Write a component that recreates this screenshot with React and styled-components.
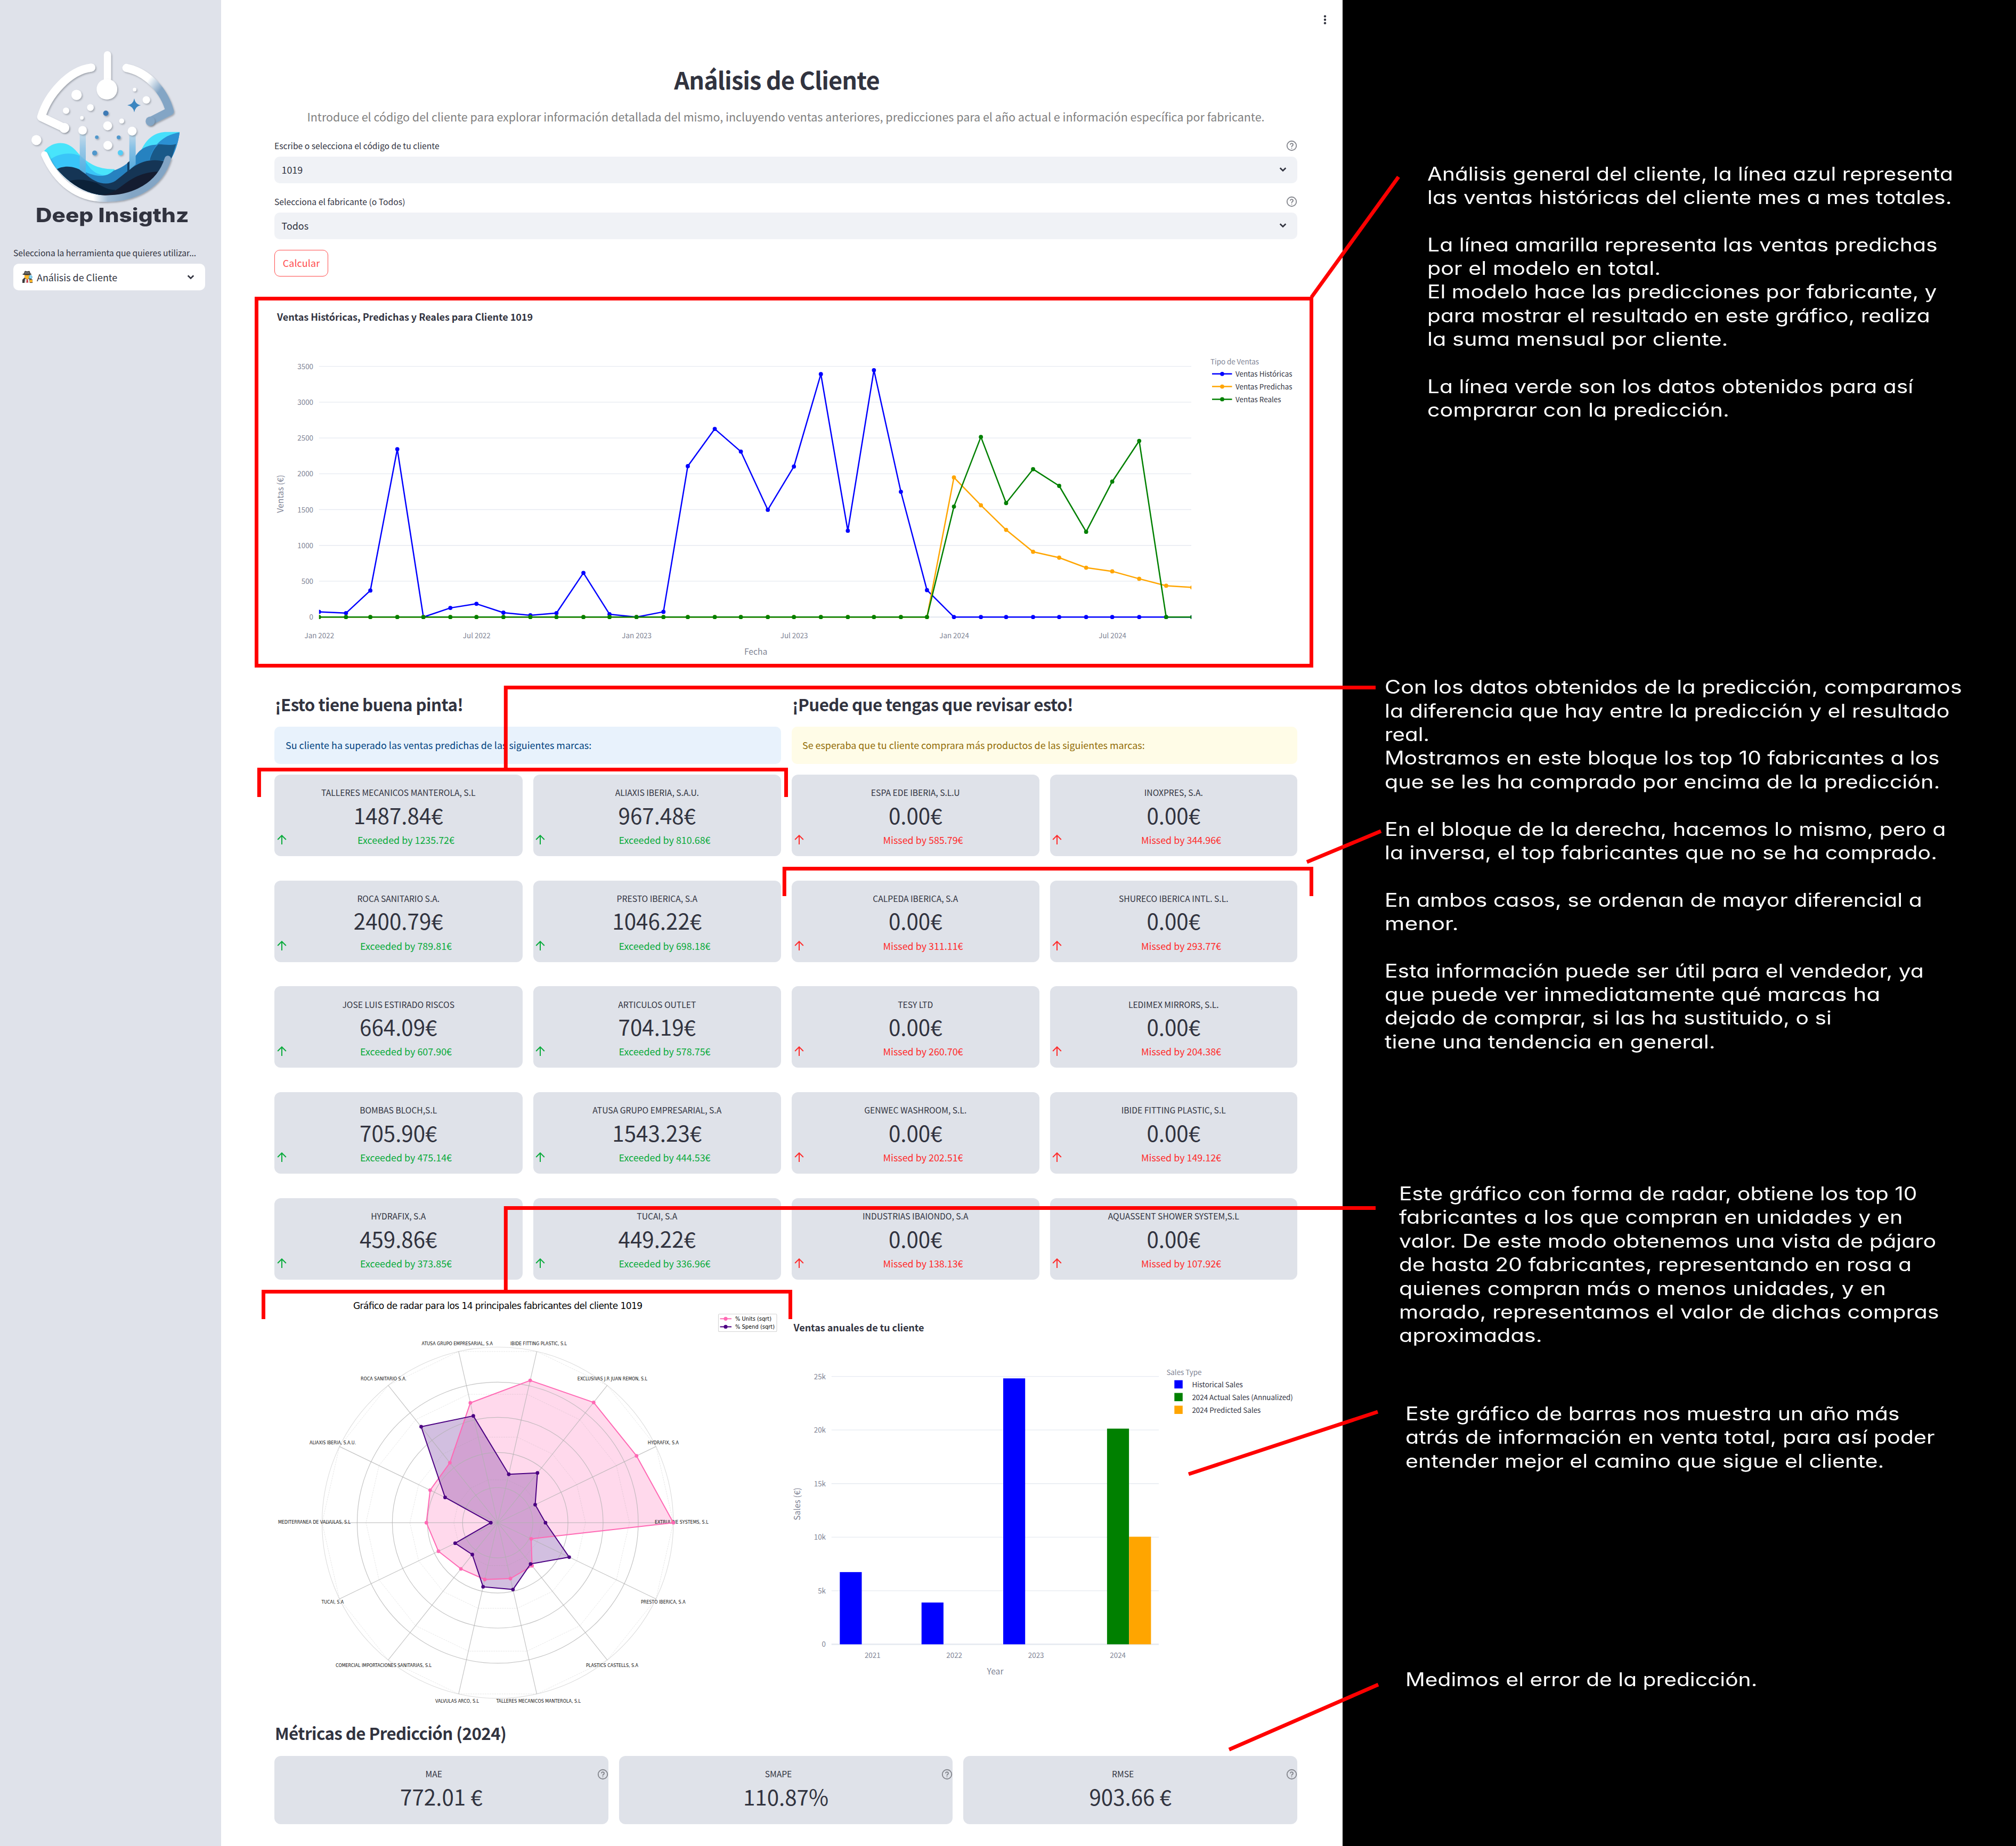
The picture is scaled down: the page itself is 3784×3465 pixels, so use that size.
import React, { useLayoutEffect, useRef, useState } from "react";
import styled, { createGlobalStyle } from "styled-components";

const SANS = `"Noto Sans CJK SC", "Noto Sans", sans-serif`;
const INK = "#31333f";

const GlobalStyle = createGlobalStyle`
  * { box-sizing: border-box; }
  html, body { margin: 0; padding: 0; background: #000; }
  body { font-family: ${SANS}; color: ${INK}; }
  svg { display: block; }
`;

/* ---------- text that keeps a fixed measure ---------- */

const FitSpan = styled.span`
  display: inline-block;
  white-space: pre;
  transform-origin: left center;
`;

function Fit({ w, stretch, children }) {
  const ref = useRef(null);
  const [style, setStyle] = useState({});
  useLayoutEffect(() => {
    if (!w) return;
    const natural = ref.current.offsetWidth;
    if (stretch) setStyle({ transform: `scaleX(${w / natural})` });
    else setStyle({ letterSpacing: `${(w - natural) / children.length}px` });
  }, [w, stretch, children]);
  return (
    <FitSpan ref={ref} style={style}>
      {children}
    </FitSpan>
  );
}

/* ---------- page frame ---------- */

const Page = styled.div`
  position: relative;
  display: grid;
  grid-template-columns: 415px 2105px 1264px;
  width: 3784px;
  height: 3465px;
  overflow: hidden;
`;

const Sidebar = styled.aside`
  display: flex;
  flex-direction: column;
  padding: 90px 30px 0 25px;
  background: #dfe2ea;
`;

const LogoBox = styled.div`
  padding-left: 25px;
  height: 292px;
`;

const Brand = styled.div`
  padding-left: 42px;
  font: 800 37px/44px Inter, sans-serif;
  color: #31333f;
  height: 81px;
`;

const Label = styled.div`
  display: flex;
  align-items: center;
  justify-content: space-between;
  font-size: 15.66px;
  line-height: 24px;
  height: 24px;
`;

const Select = styled.div`
  display: flex;
  align-items: center;
  justify-content: space-between;
  height: 50px;
  margin-top: 8px;
  padding: 0 20px 1px ${(p) => (p.$side ? 16 : 13.5)}px;
  border-radius: 10px;
  background: ${(p) => (p.$side ? "#fff" : "#f0f2f6")};
  font-size: 17.9px;
  line-height: 30px;
`;

const SelectValue = styled.div`
  display: flex;
  align-items: center;
  gap: 7px;
`;

const Main = styled.main`
  display: flex;
  flex-direction: column;
  padding: 0 85px 0 100px;
  background: #fff;
`;

const TopBar = styled.header`
  display: flex;
  justify-content: flex-end;
  align-items: center;
  height: 73px;
  margin-right: -57px;
`;

const Title = styled.h1`
  margin: 46.4px 34px 0 0;
  font-size: 45px;
  line-height: 60px;
  font-weight: 600;
  text-align: center;
`;

const Subtitle = styled.p`
  margin: 22px 0 24.5px;
  font-size: 21.5px;
  line-height: 36px;
  color: #808080;
  text-align: center;
`;

const Field = styled.div`
  margin-bottom: ${(p) => p.$after}px;
`;

const Button = styled.button`
  align-self: flex-start;
  width: 101px;
  height: 50px;
  padding: 0 0 1px;
  border: 1.4px solid #ff4b4b;
  border-radius: 10px;
  background: #fff;
  color: #ff4b4b;
  font: 400 17.9px/30px ${SANS};
`;

const ChartBlock = styled.section`
  margin-top: 41px;
`;

const Columns = styled.div`
  display: grid;
  grid-template-columns: 951px 949px;
  column-gap: 20px;
  margin-top: ${(p) => p.$top}px;
`;

const Heading = styled.h3`
  margin: 0;
  margin-top: ${(p) => p.$top || 0}px;
  padding-left: 1px;
  font-size: 31.3px;
  line-height: 44px;
  font-weight: 600;
`;

const Alert = styled.div`
  display: flex;
  align-items: center;
  height: 70px;
  margin: 19.65px 0 20px;
  padding: 0 0 1px ${(p) => (p.$warn ? 20 : 21)}px;
  border-radius: 10px;
  font-size: 17.9px;
  line-height: 28px;
  background: ${(p) => (p.$warn ? "#fffce7" : "#e8f2fc")};
  color: ${(p) => (p.$warn ? "#926c05" : "#004280")};
`;

const Cards = styled.div`
  display: grid;
  grid-template-columns: repeat(${(p) => p.$cols}, 1fr);
  column-gap: 20px;
  row-gap: 45.5px;
  margin-top: ${(p) => p.$top || 0}px;
`;

const Card = styled.article`
  height: ${(p) => p.$h}px;
  padding-top: 22.4px;
  border-radius: 12px;
  background: #dfe2e9;
`;

const CardLabel = styled.div`
  display: flex;
  align-items: center;
  height: 24px;
  font-size: 15.66px;
  line-height: 24px;
  span {
    flex: 1;
    text-align: center;
  }
  span:not(:last-child) {
    padding-right: 7px;
  }
`;

const CardValue = styled.div`
  margin-top: 2.5px;
  font-size: 40.3px;
  line-height: 54px;
  text-align: center;
`;

const Delta = styled.div`
  display: flex;
  align-items: center;
  margin-top: 4.2px;
  padding-left: 4.5px;
  height: 30px;
  font-size: 17.9px;
  line-height: 30px;
  color: ${(p) => (p.$down ? "#ff2b2b" : "#09ab3b")};
  span {
    flex: 1;
    padding-left: 6px;
    text-align: center;
  }
`;

const Notes = styled.aside`
  display: flex;
  flex-direction: column;
  background: #000;
`;

const Note = styled.div`
  margin: ${(p) => p.$top}px 0 0 ${(p) => p.$left}px;
  font: 400 35px/44.36px Inter, sans-serif;
  font-feature-settings: "cv11" 1;
  color: #fff;
`;

const NoteLine = styled.div`
  height: 44.36px;
`;

const Overlay = styled.svg`
  position: absolute;
  left: 0;
  top: 0;
  pointer-events: none;
`;

const T = styled.text`
  font-family: ${(p) => (p.$dv ? `"DejaVu Sans", sans-serif` : SANS)};
  font-size: ${(p) => p.$s || 13.4}px;
  font-weight: ${(p) => (p.$b ? 700 : 400)};
  fill: ${(p) => p.$c || "#808495"};
  text-anchor: ${(p) => p.$a || "start"};
`;

/* ---------- icons ---------- */

const Chevron = () => (
  <svg width="14" height="10" viewBox="0 0 14 10">
    <path d="M1.7 2.2L7 7.4l5.3-5.2" fill="none" stroke={INK} strokeWidth="2.7" />
  </svg>
);

const Help = () => (
  <svg width="21" height="21" viewBox="0 0 24 24" fill="none" stroke="#83858c" strokeWidth="2.1" strokeLinecap="round" strokeLinejoin="round">
    <circle cx="12" cy="12" r="10" />
    <path d="M9.1 9a3 3 0 0 1 5.8 1c0 2-2.9 2.6-2.9 4" />
    <path d="M12 17.3h.01" />
  </svg>
);

const ArrowUp = () => (
  <svg width="18" height="20" viewBox="0 0 18 20">
    <path d="M9 19V2.6M1.2 10L9 2.2l7.8 7.8" fill="none" stroke="currentColor" strokeWidth="2" />
  </svg>
);

const Dots = () => (
  <svg width="10" height="24" viewBox="0 0 10 24" fill={INK}>
    <circle cx="5" cy="5.6" r="2.2" />
    <circle cx="5" cy="12" r="2.2" />
    <circle cx="5" cy="18.4" r="2.2" />
  </svg>
);

const Detective = () => (
  <svg width="21" height="23" viewBox="0 0 21 23">
    <path d="M1 23v-6l4-4h10l5 4v6z" fill="#3c3c3c" />
    <path d="M5 5h10v8l-5 4-5-4z" fill="#fbb62b" />
    <path d="M4 6.5L6 1l4 1 4-1 2 5.5z" fill="#6b6b6b" stroke="#222" strokeWidth="1" />
    <path d="M1 7.2q9 2.4 17.5 0l-1.5-1.6q-7.5 1.5-14.5 0z" fill="#3a3a3a" />
    <path d="M6 15l4 2 4-2 1 8H5z" fill="#e8e8e8" />
    <path d="M9.2 16.5h1.800l.6 6h-3z" fill="#c81e2b" />
    <circle cx="16.3" cy="12" r="3" fill="#8fd8f5" stroke="#4aa5d0" strokeWidth="1" />
    <circle cx="17.3" cy="19.5" r="2.7" fill="#fbb62b" />
  </svg>
);

const Logo = () => (
  <svg width="300" height="297" viewBox="150 90 900 890">
    <defs>
      <linearGradient id="arc" gradientUnits="userSpaceOnUse" x1="800" y1="250" x2="900" y2="330">
        <stop offset="0.3" stopColor="#fff" />
        <stop offset="1" stopColor="#83a5c5" />
      </linearGradient>
      <linearGradient id="bowl" gradientUnits="userSpaceOnUse" x1="500" y1="0" x2="740" y2="0">
        <stop offset="0.1" stopColor="#fff" />
        <stop offset="0.45" stopColor="#a3bdd6" />
        <stop offset="1" stopColor="#83a5c5" />
      </linearGradient>
      <linearGradient id="beam" x1="0" y1="0" x2="0" y2="1">
        <stop offset="0" stopColor="#c9dcea" />
        <stop offset="0.4" stopColor="#8bc3e6" />
        <stop offset="1" stopColor="#55a9dc" />
      </linearGradient>
      <filter id="soft" x="-20%" y="-20%" width="140%" height="140%">
        <feDropShadow dx="5" dy="6" stdDeviation="4" floodColor="#555b66" floodOpacity="0.45" />
      </filter>
      <clipPath id="sea">
        <path d="M235 560H1012C1005 620 985 680 962 716A370 370 0 0 1 610 922C440 915 330 800 262 690L235 650z" />
      </clipPath>
    </defs>
    <g clipPath="url(#sea)">
      <path d="M250 668C300 612 375 610 425 665C490 745 560 775 645 772L655 930H300z" fill="#48e4fb" />
      <path d="M795 665C830 590 880 563 940 563H1012L960 720H790z" fill="#46e0fc" />
      <path d="M280 720C330 680 400 675 450 697C490 720 500 800 590 806C620 806 660 790 690 760L600 930H300z" fill="#39c5f8" />
      <path d="M484 790C560 820 600 815 640 780C700 760 730 730 765 695C800 640 860 632 900 634C950 580 980 572 1012 565V930H400z" fill="#2682c0" />
      <path d="M840 722C855 650 910 580 1012 565V640L965 720z" fill="#2b90d2" />
      <path d="M843 722C850 690 870 650 893 632C930 634 960 640 992 630L962 725z" fill="#195988" />
      <path d="M310 778C360 745 430 755 475 792C530 850 600 870 650 838C740 770 790 700 930 728L900 930H400z" fill="#153555" />
      <path d="M380 842C440 820 500 835 545 850C590 880 620 890 650 888L620 930H400z" fill="#0b2138" />
      <path d="M580 916C680 910 720 790 890 786L800 930H570z" fill="#141c30" />
    </g>
    <path d="M449 560h34v240q-17-10-34-24z" fill="url(#beam)" opacity="0.85" />
    <path d="M728 560h36v185l-36 32z" fill="url(#beam)" />
    <path d="M717 737l12-10v48l-12 10z" fill="#123f66" />
    <g fill="none" strokeLinecap="round" strokeLinejoin="round" filter="url(#soft)">
      <path d="M514 200C390 215 270 350 232 478L362 540" stroke="#fff" strokeWidth="46" />
      <path d="M712 202C830 225 925 330 956 446L846 502" stroke="url(#arc)" strokeWidth="46" />
      <path d="M250 690C320 850 440 938 590 938C760 940 900 860 945 715" stroke="url(#bowl)" strokeWidth="37" />
      <path d="M605 128V300" stroke="#fff" strokeWidth="41" />
    </g>
    <g fill="#fff" filter="url(#soft)">
      <circle cx="602" cy="322" r="58" />
      <circle cx="362" cy="540" r="28" />
      <circle cx="431" cy="354" r="29" />
      <circle cx="509" cy="425" r="19" />
      <circle cx="372" cy="443" r="18" />
      <circle cx="461" cy="483" r="10" />
      <circle cx="465" cy="553" r="24" />
      <circle cx="744" cy="558" r="25" />
      <circle cx="606" cy="528" r="25" />
      <circle cx="607" cy="638" r="25" />
      <circle cx="685" cy="501" r="14" />
      <circle cx="758" cy="324" r="10" />
      <circle cx="824" cy="382" r="21" />
      <circle cx="205" cy="608" r="28" />
      <circle cx="846" cy="502" r="26" fill="#83a5c5" />
      <circle cx="596" cy="457" r="15" fill="#3c7ab5" />
      <circle cx="545" cy="592" r="10" fill="#4f97cc" />
      <circle cx="668" cy="593" r="11" fill="#4f97cc" />
      <circle cx="533" cy="681" r="14" fill="#4f97cc" />
      <circle cx="678" cy="680" r="15" fill="#55cdf5" />
    </g>
    <path d="M756 374Q762 408 793 412Q762 418 756 452Q750 418 717 412Q750 408 756 374z" fill="#3c86c0" />
  </svg>
);

/* ---------- monthly sales chart ---------- */

const START = Date.UTC(2022, 0, 1);
const monthX = (i) => 598.8 + ((Date.UTC(2022, i, 1) - START) / 86400000) * 1.6325;
const salesY = (v) => 1158.2 - v * 0.13446;
const zeros = (n) => Array(n).fill(0);

const SERIES = [
  {
    name: "Ventas Históricas",
    color: "#0000ff",
    width: 106.5,
    data: [73, 55, 370, 2344, 0, 127, 185, 61, 24, 55, 616, 39, 0, 73, 2107, 2626, 2310, 1497, 2101, 3391, 1205, 3446, 1749, 376, ...zeros(10)],
  },
  {
    name: "Ventas Predichas",
    color: "#ffa500",
    width: 106.5,
    data: [...zeros(24), 1949, 1560, 1217, 911, 829, 689, 638, 534, 437, 413],
  },
  {
    name: "Ventas Reales",
    color: "#008000",
    width: 85.5,
    data: [...zeros(24), 1542, 2514, 1591, 2064, 1831, 1190, 1891, 2459, 0, 0],
  },
];

const MONTH_TICKS = [
  [0, "Jan 2022"], [6, "Jul 2022"], [12, "Jan 2023"],
  [18, "Jul 2023"], [24, "Jan 2024"], [30, "Jul 2024"],
];

function SalesChart() {
  return (
    <svg width="1920" height="690" viewBox="515 560 1920 690">
      <clipPath id="plot">
        <rect x="598.8" y="660" width="1637.4" height="520" />
      </clipPath>
      <T x="520" y="602" $s={18} $b $c={INK} textLength="480">
        Ventas Históricas, Predichas y Reales para Cliente 1019
      </T>
      {[0, 500, 1000, 1500, 2000, 2500, 3000, 3500].map((v) => (
        <g key={v}>
          <line x1="598.8" x2="2236" y1={salesY(v)} y2={salesY(v)} stroke="#e6eaf1" strokeWidth={v ? 1.3 : 2.6} />
          <T x="588" y={salesY(v) + 5} $a="end">{v}</T>
        </g>
      ))}
      {MONTH_TICKS.map(([i, label]) => (
        <T key={label} x={monthX(i) + 0.5} y="1198" $a="middle">{label}</T>
      ))}
      <g clipPath="url(#plot)">
        {SERIES.map((s) => (
          <g key={s.name} fill={s.color}>
            <polyline
              points={s.data.map((v, i) => `${monthX(i)},${salesY(v)}`).join(" ")}
              fill="none" stroke={s.color} strokeWidth="2.5" strokeLinejoin="round"
            />
            {s.data.map((v, i) => (
              <circle key={i} cx={monthX(i)} cy={salesY(v)} r="3.9" />
            ))}
          </g>
        ))}
      </g>
      <T x="1418.6" y="1229" $s={15.66} $a="middle">Fecha</T>
      <T transform="translate(532 927) rotate(-90)" $s={15.66} $a="middle">Ventas (€)</T>
      <T x="2272" y="684" textLength="91">Tipo de Ventas</T>
      {SERIES.map((s, i) => (
        <g key={s.name}>
          <line x1="2275" x2="2312.5" y1={701.8 + i * 23.8} y2={701.8 + i * 23.8} stroke={s.color} strokeWidth="2.5" />
          <circle cx="2294" cy={701.8 + i * 23.8} r="3.9" fill={s.color} />
          <T x="2319" y={706.5 + i * 24.1} $c={INK} textLength={s.width}>{s.name}</T>
        </g>
      ))}
    </svg>
  );
}

/* ---------- radar chart ---------- */

const RADAR = [
  ["EXTRULINE SYSTEMS, S.L", 1229, 1329.6, 2860, 1, 0.272],
  ["HYDRAFIX, S.A", 1215.7, 1274, 2711, 0.877, 0.2367],
  ["EXCLUSIVAS J.R JUAN REMON, S.L", 1083.7, 1215, 2591.4, 0.876, 0.363],
  ["IBIDE FITTING PLASTIC, S.L", 958, 1064, 2525, 0.831, 0.283],
  ["ATUSA GRUPO EMPRESARIAL, S.A", 791.6, 925, 2525, 0.7, 0.624],
  ["ROCA SANITARIO S.A.", 677, 763, 2591.4, 0.437, 0.699],
  ["ALIAXIS IBERIA, S.A.U.", 581, 668, 2711, 0.427, 0.3325],
  ["MEDITERRANEA DE VALVULAS, S.L", 522, 658, 2860, 0.406, 0.0394],
  ["TUCAI, S.A", 603.6, 645, 3010, 0.3745, 0.269],
  ["COMERCIAL IMPORTACIONES SANITARIAS, S.L", 630, 810, 3129, 0.336, 0.232],
  ["VALVULAS ARCO, S.L", 817, 899, 3195.5, 0.3315, 0.374],
  ["TALLERES MECANICOS MANTEROLA, S.L", 931.4, 1090, 3195.5, 0.326, 0.39],
  ["PLASTICS CASTELLS, S.A", 1100, 1198, 3129, 0.3136, 0.3],
  ["PRESTO IBERICA, S.A", 1203, 1286.6, 3010, 0.2114, 0.4517],
];
const CX = 934.2;
const CY = 2858.2;
const R = 329.7;
const polar = (k, v) => {
  const a = (k * 2 * Math.PI) / RADAR.length;
  return [CX + Math.cos(a) * v * R, CY - Math.sin(a) * v * R];
};
const ring = (values) => values.map((v, k) => polar(k, v).join(",")).join(" ");
const RADAR_SETS = [
  { name: "% Units (sqrt)", color: "#ff69b4", col: 4, width: 68 },
  { name: "% Spend (sqrt)", color: "#4b0082", col: 5, width: 74 },
];

function RadarChart() {
  return (
    <svg width="950" height="770" viewBox="515 2430 950 770">
      <T $dv $s={17} $c="#000" x="663" y="2456.5" textLength="543">
        Gráfico de radar para los 14 principales fabricantes del cliente 1019
      </T>
      {RADAR_SETS.map((s) => (
        <polygon key={s.name} points={ring(RADAR.map((r) => r[s.col]))} fill={s.color} fillOpacity="0.25" />
      ))}
      {[0.2, 0.4, 0.6, 0.8].map((v) => (
        <circle key={v} cx={CX} cy={CY} r={R * v} fill="none" stroke="#b0b0b0" strokeOpacity="0.75" strokeWidth="1.2" />
      ))}
      <circle cx={CX} cy={CY} r={R} fill="none" stroke="#dcdcdc" strokeWidth="1.1" />
      {[0.25, 0.5, 0.75, 1].map((v) => (
        <polygon key={v} points={ring(RADAR.map(() => v))} fill="none" stroke="#999" strokeOpacity="0.3" strokeWidth="0.8" strokeDasharray="3 1.5" />
      ))}
      {RADAR.map((r, k) => {
        const [x, y] = polar(k, 1);
        return <line key={k} x1={CX} y1={CY} x2={x} y2={y} stroke="#b0b0b0" strokeOpacity="0.75" strokeWidth="1.2" />;
      })}
      {RADAR.map(([name, x1, x2, y]) => (
        <T key={name} $dv $s={8} $c="#111" x={x1} y={y} textLength={x2 - x1} lengthAdjust="spacingAndGlyphs">{name}</T>
      ))}
      {RADAR_SETS.map((s) => (
        <g key={s.name} fill={s.color}>
          <polygon points={ring(RADAR.map((r) => r[s.col]))} fill="none" stroke={s.color} strokeWidth="2" strokeLinejoin="round" />
          {RADAR.map((r, k) => {
            const [x, y] = polar(k, r[s.col]);
            return <circle key={k} cx={x} cy={y} r="3.4" />;
          })}
        </g>
      ))}
      <rect x="1348.5" y="2466.5" width="109.5" height="33" rx="2" fill="#fff" stroke="#d4d4d4" strokeWidth="1.1" />
      {RADAR_SETS.map((s, i) => (
        <g key={s.name}>
          <line x1="1351.5" x2="1373" y1={2475.3 + i * 15.1} y2={2475.3 + i * 15.1} stroke={s.color} strokeWidth="2" />
          <circle cx="1362" cy={2475.3 + i * 15.1} r="3.6" fill={s.color} />
          <T $dv $s={9.8} $c="#000" x="1380" y={2479.2 + i * 15.1} textLength={s.width}>{s.name}</T>
        </g>
      ))}
    </svg>
  );
}

/* ---------- yearly bar chart ---------- */

const yearY = (k) => 3086.4 - k * 20.11;
const BARS = [
  [1576.3, 6.74, "#0000ff"], [1729.7, 3.9, "#0000ff"], [1883, 24.82, "#0000ff"],
  [2077.9, 20.13, "#008000"], [2119.2, 10.04, "#ffa500"],
];
const YEARS = [[1637.8, "2021"], [1791.2, "2022"], [1944.7, "2023"], [2098.2, "2024"]];
const BAR_LEGEND = [
  ["Historical Sales", "#0000ff", 95.5],
  ["2024 Actual Sales (Annualized)", "#008000", 189.5],
  ["2024 Predicted Sales", "#ffa500", 129],
];

function YearChart() {
  return (
    <svg width="949" height="770" viewBox="1486 2430 949 770">
      <T x="1489.5" y="2499" $s={18} $b $c={INK} textLength="245">Ventas anuales de tu cliente</T>
      {[0, 5, 10, 15, 20, 25].map((k) => (
        <g key={k}>
          <line x1="1560.7" x2="2175" y1={yearY(k)} y2={yearY(k)} stroke="#e6eaf1" strokeWidth={k ? 1.3 : 2.6} />
          <T x="1550" y={yearY(k) + 5} $a="end">{k ? `${k}k` : "0"}</T>
        </g>
      ))}
      {BARS.map(([x, k, c]) => (
        <rect key={x} x={x} y={yearY(k)} width="41.2" height={k * 20.11} fill={c} />
      ))}
      {YEARS.map(([x, y]) => (
        <T key={y} x={x} y="3112" $a="middle">{y}</T>
      ))}
      <T x="1868" y="3142.6" $s={15.66} $a="middle">Year</T>
      <T transform="translate(1502 2823) rotate(-90)" $s={15.66} $a="middle">Sales (€)</T>
      <T x="2189.4" y="2581" textLength="66">Sales Type</T>
      {BAR_LEGEND.map(([name, c, w], i) => (
        <g key={name}>
          <rect x="2204.3" y={2590.7 + i * 23.9} width="15.5" height="15.5" fill={c} />
          <T x="2237.4" y={2603.8 + i * 23.9} $c={INK} textLength={w}>{name}</T>
        </g>
      ))}
    </svg>
  );
}

/* ---------- content ---------- */

const GOOD = [
  ["TALLERES MECANICOS MANTEROLA, S.L", "1487.84€", "1235.72€"],
  ["ALIAXIS IBERIA, S.A.U.", "967.48€", "810.68€"],
  ["ROCA SANITARIO S.A.", "2400.79€", "789.81€"],
  ["PRESTO IBERICA, S.A", "1046.22€", "698.18€"],
  ["JOSE LUIS ESTIRADO RISCOS", "664.09€", "607.90€"],
  ["ARTICULOS OUTLET", "704.19€", "578.75€"],
  ["BOMBAS BLOCH,S.L", "705.90€", "475.14€"],
  ["ATUSA GRUPO EMPRESARIAL, S.A", "1543.23€", "444.53€"],
  ["HYDRAFIX, S.A", "459.86€", "373.85€"],
  ["TUCAI, S.A", "449.22€", "336.96€"],
];
const BAD = [
  ["ESPA EDE IBERIA, S.L.U", "0.00€", "585.79€"],
  ["INOXPRES, S.A.", "0.00€", "344.96€"],
  ["CALPEDA IBERICA, S.A", "0.00€", "311.11€"],
  ["SHURECO IBERICA INTL. S.L.", "0.00€", "293.77€"],
  ["TESY LTD", "0.00€", "260.70€"],
  ["LEDIMEX MIRRORS, S.L.", "0.00€", "204.38€"],
  ["GENWEC WASHROOM, S.L.", "0.00€", "202.51€"],
  ["IBIDE FITTING PLASTIC, S.L", "0.00€", "149.12€"],
  ["INDUSTRIAS IBAIONDO, S.A", "0.00€", "138.13€"],
  ["AQUASSENT SHOWER SYSTEM,S.L", "0.00€", "107.92€"],
];
const ERRORS = [["MAE", "772.01 €"], ["SMAPE", "110.87%"], ["RMSE", "903.66 €"]];

const NOTES = [
  {
    top: 303.5, left: 159,
    lines: [
      ["Análisis general del cliente, la línea azul representa", 987],
      ["las ventas históricas del cliente mes a mes totales.", 985],
      null,
      ["La línea amarilla representa las ventas predichas", 958],
      ["por el modelo en total.", 438],
      ["El modelo hace las predicciones por fabricante, y", 957],
      ["para mostrar el resultado en este gráfico, realiza", 944],
      ["la suma mensual por cliente.", 565],
      null,
      ["La línea verde son los datos obtenidos para así", 912],
      ["comprarar con la predicción.", 567],
    ],
  },
  {
    top: 475.9, left: 79,
    lines: [
      ["Con los datos obtenidos de la predicción, comparamos", 1083],
      ["la diferencia que hay entre la predicción y el resultado", 1060],
      ["real.", 84],
      ["Mostramos en este bloque los top 10 fabricantes a los", 1041],
      ["que se les ha comprado por encima de la predicción.", 1043],
      null,
      ["En el bloque de la derecha, hacemos lo mismo, pero a", 1054],
      ["la inversa, el top fabricantes que no se ha comprado.", 1037],
      null,
      ["En ambos casos, se ordenan de mayor diferencial a", 1009],
      ["menor.", 139],
      null,
      ["Esta información puede ser útil para el vendedor, ya", 1012],
      ["que puede ver inmediatamente qué marcas ha", 930],
      ["dejado de comprar, si las ha sustituido, o si", 839],
      ["tiene una tendencia en general.", 621],
    ],
  },
  {
    top: 241, left: 105.5,
    lines: [
      ["Este gráfico con forma de radar, obtiene los top 10", 972],
      ["fabricantes a los que compran en unidades y en", 945],
      ["valor. De este modo obtenemos una vista de pájaro", 1008],
      ["de hasta 20 fabricantes, representando en rosa a", 962],
      ["quienes compran más o menos unidades, y en", 914],
      ["morado, representamos el valor de dichas compras", 1014],
      ["aproximadas.", 269],
    ],
  },
  {
    top: 102.5, left: 118,
    lines: [
      ["Este gráfico de barras nos muestra un año más", 927],
      ["atrás de información en venta total, para así poder", 994],
      ["entender mejor el camino que sigue el cliente.", 899],
    ],
  },
  { top: 365.8, left: 118, lines: [["Medimos el error de la predicción.", 660]] },
];

function Brands({ title, titleWidth, text, textWidth, items, bad }) {
  return (
    <section>
      <Heading><Fit w={titleWidth}>{title}</Fit></Heading>
      <Alert $warn={bad}><Fit w={textWidth}>{text}</Fit></Alert>
      <Cards $cols={2}>
        {items.map(([name, value, diff]) => (
          <Card key={name} $h={153.2}>
            <CardLabel><span>{name}</span></CardLabel>
            <CardValue>{value}</CardValue>
            <Delta $down={bad}>
              <ArrowUp />
              <span>{bad ? "Missed by" : "Exceeded by"} {diff}</span>
            </Delta>
          </Card>
        ))}
      </Cards>
    </section>
  );
}

const Callouts = () => (
  <Overlay width="3784" height="3465" viewBox="0 0 3784 3465" fill="none" stroke="#ff0000" strokeWidth="7">
    <rect x="481.5" y="560.5" width="1980" height="689" />
    <path d="M2461.5 558L2625 332" />
    <path d="M486.4 1496V1444.5H1475.5V1496M949.3 1441V1290.5H2582" />
    <path d="M1472.3 1682V1630.5H2461.5V1682M2453 1618L2592 1560" />
    <path d="M494.5 2476V2424.5H1483.5V2476M949.3 2421V2267.500H2582" />
    <path d="M2231 2767L2586 2650M2307 3284L2587 3162" />
  </Overlay>
);

export default function App() {
  return (
    <Page>
      <GlobalStyle />
      <Sidebar>
        <LogoBox><Logo /></LogoBox>
        <Brand><Fit w={288} stretch>Deep Insigthz</Fit></Brand>
        <Label><Fit w={343}>Selecciona la herramienta que quieres utilizar...</Fit></Label>
        <Select $side>
          <SelectValue><Detective /><Fit w={151}>Análisis de Cliente</Fit></SelectValue>
          <Chevron />
        </Select>
      </Sidebar>

      <Main>
        <TopBar><Dots /></TopBar>
        <Title><Fit w={386}>Análisis de Cliente</Fit></Title>
        <Subtitle>
          <Fit w={1797}>
            {"Introduce el código del cliente para explorar información detallada del mismo, incluyendo ventas anteriores, predicciones para el año actual e información específica por fabricante."}
          </Fit>
        </Subtitle>
        <Field $after={23}>
          <Label><Fit w={310}>Escribe o selecciona el código de tu cliente</Fit><Help /></Label>
          <Select>1019<Chevron /></Select>
        </Field>
        <Field $after={20}>
          <Label><Fit w={245}>Selecciona el fabricante (o Todos)</Fit><Help /></Label>
          <Select>Todos<Chevron /></Select>
        </Field>
        <Button><Fit w={70}>Calcular</Fit></Button>

        <ChartBlock><SalesChart /></ChartBlock>

        <Columns $top={50.35}>
          <Brands
            title="¡Esto tiene buena pinta!" titleWidth={353}
            text="Su cliente ha superado las ventas predichas de las siguientes marcas:" textWidth={574}
            items={GOOD}
          />
          <Brands
            bad
            title="¡Puede que tengas que revisar esto!" titleWidth={527}
            text="Se esperaba que tu cliente comprara más productos de las siguientes marcas:" textWidth={643}
            items={BAD}
          />
        </Columns>

        <Columns $top={28}>
          <RadarChart />
          <YearChart />
        </Columns>

        <Heading $top={31.35}><Fit w={434}>Métricas de Predicción (2024)</Fit></Heading>
        <Cards $cols={3} $top={20.65}>
          {ERRORS.map(([name, value]) => (
            <Card key={name} $h={128}>
              <CardLabel><span>{name}</span><Help /></CardLabel>
              <CardValue>{value}</CardValue>
            </Card>
          ))}
        </Cards>
      </Main>

      <Notes>
        {NOTES.map((note) => (
          <Note key={note.top} $top={note.top} $left={note.left}>
            {note.lines.map((line, i) => (
              <NoteLine key={i}>{line && <Fit w={line[1]} stretch>{line[0]}</Fit>}</NoteLine>
            ))}
          </Note>
        ))}
      </Notes>

      <Callouts />
    </Page>
  );
}
